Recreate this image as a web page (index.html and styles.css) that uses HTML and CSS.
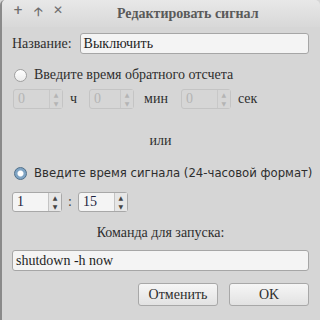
FILE: index.html
```html
<!DOCTYPE html>
<html lang="ru">
<head>
    <meta charset="UTF-8">
    <title>Редактировать сигнал</title>
    <link rel="stylesheet" href="styles.css">
</head>
<body>
<div class="window">
    <header class="titlebar">
        <div class="wm-buttons">
            <span class="wm-btn">+</span>
            <span class="wm-btn">&#129121;</span>
            <span class="wm-btn">&#10005;</span>
        </div>
        <div class="title">Редактировать сигнал</div>
    </header>
    <main class="content">
        <div class="name-row">
            <label class="label">Название:</label>
            <div class="entry grow">Выключить</div>
        </div>

        <div class="radio-row">
            <span class="radio"></span>
            <span>Введите время обратного отсчета</span>
        </div>
        <div class="spin-row">
            <div class="spin disabled"><span class="spin-val">0</span><span class="arrows">&#9650;<br>&#9660;</span></div>
            <span class="unit">ч</span>
            <div class="spin disabled mid"><span class="spin-val">0</span><span class="arrows">&#9650;<br>&#9660;</span></div>
            <span class="unit wide">мин</span>
            <div class="spin disabled"><span class="spin-val">0</span><span class="arrows">&#9650;<br>&#9660;</span></div>
            <span class="unit">сек</span>
        </div>

        <div class="or">или</div>

        <div class="radio-row second">
            <span class="radio checked"></span>
            <span class="sans">Введите время сигнала (24-часовой формат)</span>
        </div>
        <div class="spin-row time">
            <div class="spin"><span class="spin-val">1</span><span class="arrows">&#9650;<br>&#9660;</span></div>
            <span class="colon">:</span>
            <div class="spin"><span class="spin-val">15</span><span class="arrows">&#9650;<br>&#9660;</span></div>
        </div>

        <div class="cmd-label">Команда для запуска:</div>
        <div class="entry">shutdown -h now</div>

        <div class="buttons">
            <button class="btn">Отменить</button>
            <button class="btn">OK</button>
        </div>
    </main>
</div>
</body>
</html>
```

FILE: styles.css
```css
body {
    margin: 0;
    padding: 0;
    background-color: #d6d6d6;
    font-family: "Liberation Serif", serif;
    font-size: 14px;
    color: #2e2e2e;
}

.window {
    width: 320px;
    height: 320px;
    box-sizing: border-box;
    border-left: 2px solid #8a8a8a;
    background-color: #d6d6d6;
    border-radius: 5px 5px 0 0;
    overflow: hidden;
}

.titlebar {
    height: 27px;
    display: flex;
    align-items: center;
    background: linear-gradient(#e8e8e8, #d8d8d8);
}

.wm-buttons {
    display: flex;
    gap: 8px;
    padding-left: 10px;
    width: 96px;
}

.wm-btn {
    width: 12px;
    text-align: center;
    color: #6e6e6e;
    font-family: "DejaVu Sans", sans-serif;
    font-size: 12px;
    font-weight: bold;
}

.title {
    flex: 1;
    padding-left: 9px;
    color: #5a5a5a;
    font-weight: bold;
    font-size: 14px;
}

.content {
    padding: 6px 11px 0 10px;
}

.name-row {
    display: flex;
    align-items: center;
    gap: 8px;
    height: 21px;
}

.grow {
    flex: 1;
}

.entry {
    height: 19px;
    line-height: 19px;
    padding: 0 3px;
    border: 1px solid #a6a6a6;
    border-radius: 3px;
    background-color: #f4f4f4;
    color: #1e1e1e;
}

.radio-row {
    display: flex;
    align-items: center;
    gap: 7px;
    height: 14px;
    margin-top: 14px;
    padding-left: 2px;
    white-space: nowrap;
}

.radio-row.second {
    margin-top: 18px;
}

.sans {
    font-family: "DejaVu Sans", sans-serif;
    font-size: 11.7px;
}

.radio {
    flex: none;
    width: 11px;
    height: 11px;
    border: 1px solid #a0a0a0;
    border-radius: 50%;
    background: linear-gradient(#ffffff, #ececec);
}

.radio.checked {
    border-color: #4f6f8a;
    background: radial-gradient(circle, #ffffff 0 2.5px, #7fa4c4 3.5px);
}

.spin-row {
    display: flex;
    align-items: center;
    margin-top: 7px;
    padding-left: 1px;
}

.spin-row.time {
    margin-top: 12px;
    padding-left: 0;
}

.spin {
    flex: none;
    width: 50px;
    height: 20px;
    box-sizing: border-box;
    display: flex;
    border: 1px solid #a8a8a8;
    border-radius: 3px;
    background-color: #f4f4f4;
}

.spin.mid {
    width: 45px;
}

.spin-val {
    flex: 1;
    padding-left: 4px;
    line-height: 18px;
    color: #1c2440;
}

.arrows {
    width: 12px;
    border-left: 1px solid #c4c4c4;
    background-color: #e6e6e6;
    font-size: 6px;
    line-height: 9px;
    text-align: center;
    color: #444;
    font-family: "DejaVu Sans", sans-serif;
}

.spin.disabled {
    border-color: #c4c4c4;
    background-color: #d6d6d6;
}

.spin.disabled .spin-val,
.spin.disabled .arrows {
    color: #b4b4b4;
}

.spin.disabled .arrows {
    background-color: #d6d6d6;
    border-left-color: #c8c8c8;
}

.unit {
    margin: 0 12px 0 7px;
}

.unit.wide {
    margin: 0 13px 0 10px;
}

.colon {
    margin: 0 6px;
    color: #444;
}

.or {
    text-align: center;
    height: 15px;
    line-height: 15px;
    margin-top: 24px;
}

.cmd-label {
    text-align: center;
    height: 14px;
    line-height: 14px;
    margin-top: 14px;
    margin-bottom: 10px;
}

.buttons {
    display: flex;
    justify-content: flex-end;
    gap: 11px;
    margin-top: 12px;
}

.btn {
    width: 80px;
    height: 23px;
    border: 1px solid #a8a8a8;
    border-radius: 3px;
    background: linear-gradient(#f6f6f6, #e2e2e2);
    font-family: "Liberation Serif", serif;
    font-size: 14px;
    color: #2e2e2e;
}
```
